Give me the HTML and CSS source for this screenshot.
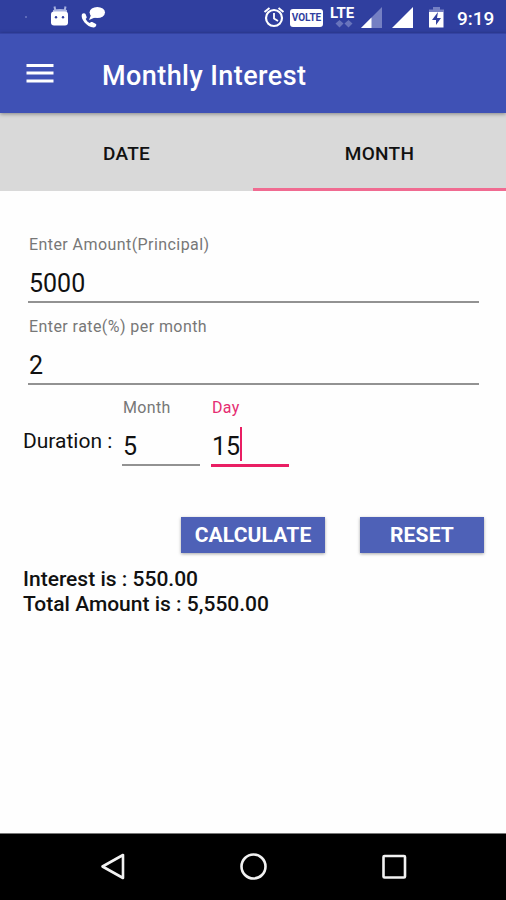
FILE: index.html
```html
<!DOCTYPE html>
<html lang="en">
<head>
<meta charset="utf-8">
<title>Monthly Interest</title>
<link rel="stylesheet" href="styles.css">
</head>
<body>
<div class="screen">
  <header class="status">
    <svg class="notifications" width="110" height="33" viewBox="0 0 110 33">
      <circle cx="26" cy="17" r=".7" fill="#aeb8e8"/>
      <path d="M54.500 6.500l1 5M65.500 6.500l-1 5" stroke="#a9b3e0" stroke-width="2"/>
      <path d="M53 10q7-2 14 0v3H53z" fill="#a9b3e0"/>
      <rect x="51" y="11.500" width="17" height="14" rx="3" fill="#fff"/>
      <circle cx="56" cy="17.300" r="1.200" fill="#303f9f"/><circle cx="63" cy="17.300" r="1.200" fill="#303f9f"/>
      <ellipse cx="97.300" cy="12.500" rx="7.700" ry="5.500" fill="#fff"/>
      <path d="M91 15l-2 5 7-3z" fill="#fff"/>
      <path d="M82 14c1-1 3-1 3.500 0l1.200 3c.2 1-.7 1.500-1 2 1 2 2 3 4 4 .7-.5 1.500-1.300 2.500-1l3.800 2c1 1-.5 3.500-2.500 3.500C87 27 80 19 82 14z" fill="#fff"/>
    </svg>
    <div class="indicators">
      <svg width="22" height="33" viewBox="0 0 22 33" fill="none" stroke="#fff">
        <circle cx="11" cy="18" r="8" stroke-width="2.200"/>
        <path d="M11 13v5.500l4 2.500" stroke-width="1.800"/>
        <path d="M1.500 12l5-4M20.500 12l-5-4" stroke-width="2"/>
      </svg>
      <span class="volte">VOLTE</span>
      <div class="lte"><span>LTE</span>
        <svg width="20" height="8" viewBox="0 0 20 8" fill="#6874bc"><path d="M5.500 0l4 3.500-4 4-4-4zM14.500 0l4 3.500-4 4-4-4z"/></svg>
      </div>
      <svg width="22" height="33" viewBox="0 0 22 33"><path d="M0 28L21 7v21z" fill="#7580c3"/><path d="M0 28l10.500-10.500V28z" fill="#fff"/></svg>
      <svg class="signal" width="22" height="33" viewBox="0 0 22 33"><path d="M0 28L21 7v21z" fill="#fff"/></svg>
      <svg class="battery" width="15" height="33" viewBox="0 0 15 33">
        <path d="M0 12V9.500h4V7h7v2.500h4V12z" fill="#7580c3"/><path d="M0 12h14.500v15.500H0z" fill="#fff"/>
        <path d="M9 12l-6 8h4v5l5-7H8z" fill="#303f9f"/>
      </svg>
      <time class="clock">9:19</time>
    </div>
  </header>

  <div class="toolbar">
    <svg width="28" height="22" viewBox="0 0 28 22" stroke="#fff" stroke-width="3"><path d="M.5 2.500h27M.5 10h27M.5 18h27"/></svg>
    <h1 class="title">Monthly Interest</h1>
  </div>

  <nav class="tabs">
    <a class="tab tab-date">DATE</a>
    <a class="tab tab-active">MONTH</a>
  </nav>

  <main class="form">
    <div class="field">
      <label class="label label-long">Enter Amount(Principal)</label>
      <div class="value">5000</div>
    </div>
    <div class="field field-rate">
      <label class="label label-long">Enter rate(%) per month</label>
      <div class="value">2</div>
    </div>
    <div class="duration">
      <span class="duration-label">Duration :</span>
      <div class="field field-short">
        <label class="label">Month</label>
        <div class="value">5</div>
      </div>
      <div class="field field-short field-focus">
        <label class="label">Day</label>
        <div class="value">15<i class="caret"></i></div>
      </div>
    </div>
    <div class="actions">
      <button class="button calculate">CALCULATE</button>
      <button class="button reset">RESET</button>
    </div>
    <div class="result"><p class="interest">Interest is : 550.00</p><p class="total">Total Amount is : 5,550.00</p></div>
  </main>

  <footer class="navbar">
    <svg width="28" height="30" viewBox="0 0 28 30"><path d="M3.500 14.500L24 3v23z"/></svg>
    <svg width="30" height="30" viewBox="0 0 30 30"><circle cx="14.500" cy="14.500" r="12"/></svg>
    <svg width="28" height="30" viewBox="0 0 28 30"><rect x="3.500" y="4" width="21.500" height="21.500" rx="1"/></svg>
  </footer>
</div>
</body>
</html>
```
FILE: styles.css
```css
* { box-sizing: border-box; }
body { margin: 0; font-family: Roboto, "Liberation Sans", sans-serif; color: #111; }
h1, p { margin: 0; }
svg { display: block; flex: none; }
.screen { width: 506px; height: 900px; display: flex; flex-direction: column; background: #fefefe; overflow: hidden; }

.status { height: 33px; flex: none; display: flex; justify-content: space-between; background: #303f9f; color: #fff; }
.indicators { display: flex; align-items: center; padding-right: 10px; }
.volte { width: 33px; height: 18px; margin: 2px 7px 0 5px; border-radius: 3px; background: #fff; color: #303f9f; font-size: 10px; font-weight: 700; line-height: 18px; text-align: center; }
.lte { width: 25px; height: 33px; margin-right: 6px; padding-top: 6px; font-size: 15px; font-weight: 700; line-height: 14px; }
.lte svg { margin-left: 4px; }
.signal { margin-left: 9px; }
.battery { margin-left: 15px; }
.clock { width: 39px; margin: 4px 0 0 13px; font-size: 19px; font-weight: 500; line-height: 30px; white-space: nowrap; }

.toolbar { height: 80px; flex: none; display: flex; align-items: center; padding-left: 26px; background: #3f51b5; color: #fff; box-shadow: 0 1px 4px rgba(0,0,0,.4); border-top: 1px solid #3443a3; position: relative; }
.title { margin: 5px 0 0 48px; font-size: 27px; font-weight: 500; line-height: 32px; letter-spacing: .43px; }

.tabs { height: 78px; flex: none; display: flex; background: #d9d9d9; }
.tab { flex: 1; display: flex; align-items: center; justify-content: center; padding-top: 5px; border-bottom: 3px solid transparent; font-size: 19px; font-weight: 500; letter-spacing: .3px; }
.tab-active { border-bottom-color: #f06b91; }

.form { flex: 1; padding: 44px 22px 0 23px; }
.field { margin: 0 5px; }
.label { display: block; height: 20px; font-size: 16px; line-height: 20px; letter-spacing: .35px; color: #777; }
.label-long { letter-spacing: .43px; }
.value { height: 48px; padding: 6px 0 0 1px; border-bottom: 2px solid #929292; font-size: 25px; line-height: 46px; display: flex; align-items: flex-start; }
.field .label { padding-left: 1px; }
.field-rate { margin-top: 14px; }
.duration { display: flex; align-items: flex-start; margin-top: 13px; }
.duration-label { width: 94px; margin-top: 30px; font-size: 21px; line-height: 26px; }
.field-short { width: 78px; margin: 0 5px; }
.field-focus { margin-left: 6px; }
.field-focus .label { color: #e52d72; }
.field-focus .value { height: 49px; border-bottom: 3px solid #e91e63; }
.caret { width: 2px; height: 34px; margin-top: 3px; background: #e91e63; }

.actions { display: flex; justify-content: flex-end; gap: 35px; margin-top: 50px; }
.button { height: 36px; padding: 1px 0 0; border: 0; background: #4e61b7; color: #fff; font: 700 21px/35px Roboto, sans-serif; letter-spacing: .15px; box-shadow: 0 1px 3px rgba(0,0,0,.35); }
.calculate { width: 144px; }
.reset { width: 124px; }
.result { margin-top: 14px; font-size: 21px; font-weight: 500; line-height: 25px; }

.navbar { height: 67px; flex: none; display: flex; align-items: center; justify-content: space-between; padding: 0 98px 0 99px; background: #000; border-top: 1px solid #777; }
.navbar svg { fill: none; stroke: #f2f2f2; stroke-width: 2.6; stroke-linejoin: round; }
```
